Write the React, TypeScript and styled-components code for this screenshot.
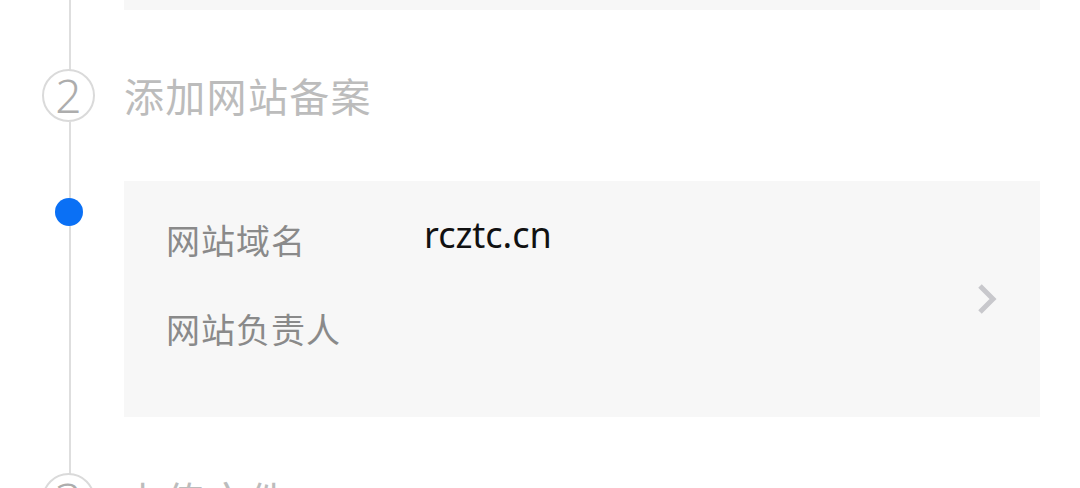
import React from "react";
import styled, { createGlobalStyle } from "styled-components";

const Global = createGlobalStyle`
  html, body { margin: 0; padding: 0; background: #ffffff; }
  body { font-family: "Noto Sans", "Noto Sans CJK SC", sans-serif; overflow: hidden; }
  #root { width: 1080px; height: 488px; overflow: hidden; }
`;

const Timeline = styled.div`
  display: flex;
  flex-direction: column;
  width: 1080px;
`;

const Row = styled.div<{ $h?: number }>`
  display: flex;
  align-items: stretch;
  ${(p) => (p.$h !== undefined ? `height: ${p.$h}px;` : "")}
`;

const Rail = styled.div<{ $align?: string; $pt?: number }>`
  flex: 0 0 124px;
  display: flex;
  justify-content: flex-start;
  align-items: ${(p) => p.$align || "center"};
  padding-top: ${(p) => p.$pt || 0}px;
  box-sizing: border-box;
  background: linear-gradient(#dedede, #dedede) no-repeat 69px 0 / 2px 100%;
`;

const Card = styled.div`
  flex: 0 0 916px;
  background: #f7f7f7;
  box-sizing: border-box;
`;

const StepCircle = styled.div`
  width: 53px;
  height: 53px;
  margin-left: 42px;
  box-sizing: border-box;
  border: 2px solid #dadada;
  border-radius: 50%;
  background: #ffffff;
  display: flex;
  align-items: center;
  justify-content: center;
  color: #adadad;
  font-size: 46px;
  font-weight: 300;
  line-height: 1;
  font-family: "Noto Sans", sans-serif;
`;

const StepTitle = styled.div`
  display: flex;
  align-items: center;
  font-size: 40px;
  color: #bcbcbc;
  letter-spacing: 1.3px;
  white-space: nowrap;
`;

const Dot = styled.div`
  width: 28px;
  height: 28px;
  margin-left: 55px;
  border-radius: 50%;
  background: #0a70f5;
`;

const InfoCard = styled(Card)`
  height: 236px;
  display: flex;
  align-items: center;
  padding: 0 42px 0 42px;
`;

const Fields = styled.div`
  flex: 1;
  align-self: flex-start;
  margin-top: 14px;
  display: grid;
  grid-template-columns: 258px 1fr;
  grid-auto-rows: 89px;
  align-items: center;
`;

const Label = styled.div`
  font-size: 34px;
  color: #8a8a8a;
  letter-spacing: 1px;
`;

const Value = styled.div`
  font-size: 36px;
  color: #111111;
  margin-top: -10px;
`;

const Chevron = () => (
  <svg width="22" height="32" viewBox="0 0 22 32" style={{ flex: "none" }}>
    <path d="M4 3 L17 16 L4 29" fill="none" stroke="#c8c8cc" strokeWidth="5" strokeLinejoin="miter" />
  </svg>
);

export default function App() {
  return (
    <>
      <Global />
      <Timeline>
        <Row $h={10}>
          <Rail />
          <Card />
        </Row>
        <Row $h={59}>
          <Rail />
        </Row>
        <Row $h={52}>
          <Rail>
            <StepCircle>2</StepCircle>
          </Rail>
          <StepTitle>添加网站备案</StepTitle>
        </Row>
        <Row $h={60}>
          <Rail />
        </Row>
        <Row>
          <Rail $align="flex-start" $pt={17}>
            <Dot />
          </Rail>
          <InfoCard>
            <Fields>
              <Label>网站域名</Label>
              <Value>rcztc.cn</Value>
              <Label>网站负责人</Label>
              <Value />
            </Fields>
            <Chevron />
          </InfoCard>
        </Row>
        <Row $h={56}>
          <Rail />
        </Row>
        <Row $h={52}>
          <Rail>
            <StepCircle>3</StepCircle>
          </Rail>
          <StepTitle>上传文件</StepTitle>
        </Row>
      </Timeline>
    </>
  );
}
